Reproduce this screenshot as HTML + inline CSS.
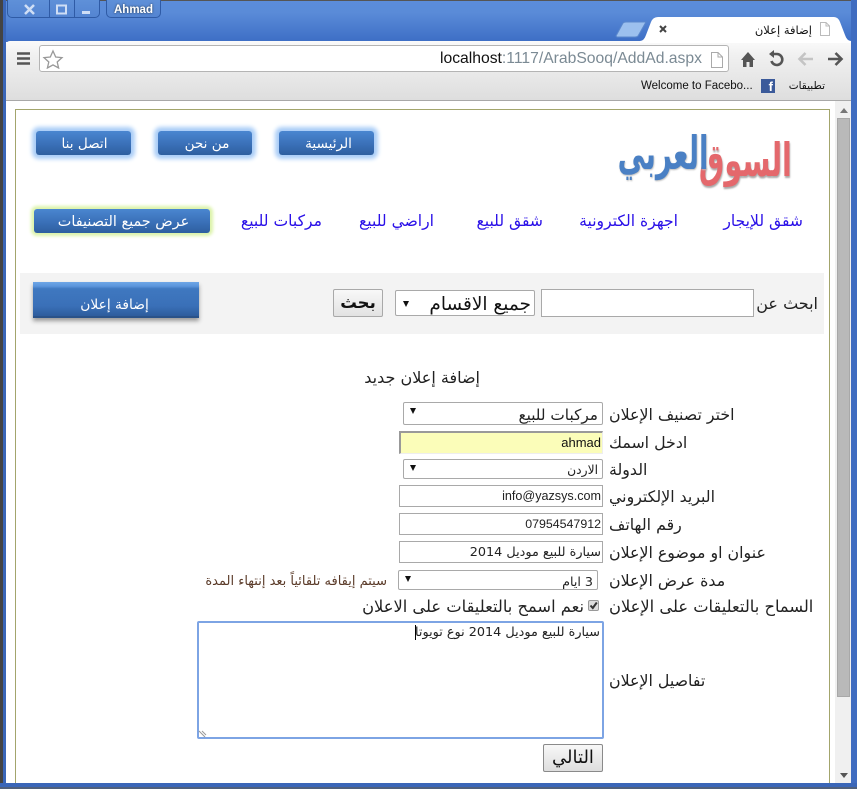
<!DOCTYPE html>
<html lang="ar"><head><meta charset="utf-8"><title>إضافة إعلان</title>
<style>
html,body{margin:0;padding:0;width:857px;height:789px;overflow:hidden;background:#fff}
body{position:relative;font-family:"DejaVu Sans","Liberation Sans",sans-serif;color:#222}
.a{position:absolute;box-sizing:border-box}
.t{position:absolute;white-space:nowrap;direction:rtl;text-align:right;line-height:18px}
.bl{color:#2a10e8;font-size:15.6px}
.btn{position:absolute;box-sizing:border-box;color:#fff;text-align:center;border-radius:3px;background:linear-gradient(#4a86d0,#3a70b8 55%,#2e5f9f);font-size:13.6px;line-height:26px;direction:rtl;white-space:nowrap;overflow:hidden}
.sel,.inp{position:absolute;box-sizing:border-box;background:#fff;border:1px solid #a9a9a9;direction:rtl;white-space:nowrap;color:#222;font-size:12px}
.sel{border-radius:2px}
.arr{position:absolute;left:6px;top:7px;width:0;height:0;border-left:3.5px solid transparent;border-right:3.5px solid transparent;border-top:6px solid #111}
.lb{position:absolute;left:609px;white-space:nowrap;direction:rtl;font-size:15.8px;line-height:18px;color:#222}
</style></head><body>
<!-- window chrome -->
<div class="a" style="left:0;top:0;width:857px;height:42px;background:linear-gradient(#5b8ddb,#5a8bd8 30%,#3d6ec5)"></div>
<div class="a" style="left:0;top:0;width:857px;height:1px;background:#555"></div>
<div class="a" style="left:0;top:0;width:3px;height:789px;background:#444"></div>
<div class="a" style="left:3px;top:0;width:3px;height:789px;background:#3a66b8"></div>
<div class="a" style="left:851px;top:0;width:6px;height:789px;background:#3f6cc0"></div>
<!-- caption buttons -->
<div class="a" style="left:7px;top:0;width:93px;height:18px;background:linear-gradient(#5f90d8,#5485d2);border:1px solid #2f5ba6;border-top:0;border-radius:0 0 5px 5px"></div>
<div class="a" style="left:49px;top:0;width:1px;height:17px;background:#2f5ba6"></div>
<div class="a" style="left:74px;top:0;width:1px;height:17px;background:#2f5ba6"></div>
<svg class="a" style="left:20px;top:3px" width="70" height="14"><path d="M5 2 14 11M14 2 5 11" stroke="#cfdef5" stroke-width="2.500"/><rect x="37" y="2.500" width="9" height="8" fill="none" stroke="#cfdef5" stroke-width="2"/><rect x="62" y="8" width="10" height="3" fill="#cfdef5"/></svg>
<div class="a" style="left:106px;top:0;width:55px;height:18px;background:linear-gradient(#5f90d8,#5485d2);border:1px solid #2f5ba6;border-top:0;border-radius:0 0 5px 5px;color:#fff;font:bold 11.5px/20px 'Liberation Sans',sans-serif;text-align:center;text-shadow:0 0 2px #234">Ahmad</div>
<!-- toolbar -->
<div class="a" style="left:6px;top:41px;width:845px;height:60px;background:linear-gradient(#fafafa,#f0f0f0 25%,#dedede);border-radius:4px 4px 0 0;border-bottom:1px solid #a8a8a8"></div>
<!-- tabs -->
<svg class="a" style="left:610px;top:15px" width="247" height="28"><path d="M6 21 13 8Q14 7 16 7H36L28 21Q27 22 25 22H7Z" fill="#9cc0ee" stroke="#5b88cc"/><path d="M30 26Q34 26 36 20L41 7Q43 2 48 2H224Q228 2 230 7L235 20Q237 26 241 26V28H30Z" fill="#fff"/></svg>
<svg class="a" style="left:656px;top:22px" width="14" height="14"><path d="M4 4 10 10M10 4 4 10" stroke="#444" stroke-width="2"/></svg>
<div class="t" style="right:45px;top:21px;font-size:11.500px;color:#111">إضافة إعلان</div>
<svg class="a" style="left:819px;top:21px" width="12" height="16"><path d="M1.5 1.5H7L10.5 5V14.5H1.5ZM7 1.5V5H10.5" fill="#fff" stroke="#bbb"/></svg>
<!-- address bar -->
<div class="a" style="left:39px;top:45px;width:690px;height:27px;background:#fff;border:1px solid #b4b4b4;border-radius:3px"></div>
<div class="a" style="left:440px;top:49px;white-space:nowrap;font:15.7px/20px 'Liberation Sans',sans-serif;color:#111">localhost<span style="color:#7b8a94">:1117/ArabSooq/AddAd.aspx</span></div>
<svg class="a" style="left:710px;top:51px" width="14" height="18"><path d="M1.5 1.5H8L12.5 6V16.5H1.5ZM8 1.5V6H12.5" fill="#fff" stroke="#aaa"/></svg>
<svg class="a" style="left:16px;top:51px" width="16" height="15"><path d="M1 2.5H14M1 7.5H14M1 12.5H14" stroke="#555" stroke-width="2.6"/></svg>
<svg class="a" style="left:42px;top:49px" width="22" height="20"><path d="M11 2 13.7 8 20 8.6 15.2 13 16.6 19 11 15.9 5.4 19 6.8 13 2 8.6 8.3 8Z" fill="#fff" stroke="#999" stroke-width="1.3"/></svg>
<svg class="a" style="left:738px;top:50px" width="20" height="18"><path d="M10 2 3 10H5V17H8.500V12H11.500V17H15V10H17Z" fill="#555"/></svg>
<svg class="a" style="left:767px;top:50px" width="18" height="18"><path d="M4 4H10A5.500 5.500 0 1 1 4.500 11" fill="none" stroke="#555" stroke-width="2.600"/><path d="M2 4 7 0V8Z" fill="#555"/></svg>
<svg class="a" style="left:797px;top:51px" width="18" height="16"><path d="M16 8H3M8.500 2 2.500 8 8.500 14" fill="none" stroke="#c4c4c4" stroke-width="2.600"/></svg>
<svg class="a" style="left:826px;top:51px" width="18" height="16"><path d="M2 8H15M9.500 2 15.500 8 9.500 14" fill="none" stroke="#555" stroke-width="2.600"/></svg>
<!-- bookmarks -->
<div class="a" style="left:641px;top:78px;white-space:nowrap;font:11.5px/16px 'Liberation Sans',sans-serif;color:#111">Welcome to Facebo...</div>
<div class="a" style="left:761px;top:79px;width:14px;height:14px;background:#3b5a9a;color:#fff;font:bold 13px/16px 'Liberation Sans',sans-serif;text-align:right;padding-right:2px">f</div>
<div class="t" style="right:32px;top:77px;font-size:10.500px;color:#111">تطبيقات</div>
<!-- page -->
<div class="a" style="left:15px;top:109px;width:815px;height:690px;border:1px solid #a3a56c"></div>
<div class="a" style="left:835px;top:101px;width:16px;height:682px;background:#f0f0f0"></div>
<div class="a" style="left:837px;top:118px;width:13px;height:579px;background:#b9b9b9;border:1px solid #a8a8a8"></div>
<div class="a" style="left:840px;top:108px;width:0;height:0;border-left:4px solid transparent;border-right:4px solid transparent;border-bottom:5px solid #777"></div>
<div class="a" style="left:840px;top:773px;width:0;height:0;border-left:4px solid transparent;border-right:4px solid transparent;border-top:5px solid #555"></div>
<!-- frame bottom, above page overflow -->
<div class="a" style="left:0;top:783px;width:857px;height:4px;background:#3a66b8"></div>
<div class="a" style="left:0;top:787px;width:857px;height:2px;background:#50607c"></div>
<!-- nav buttons -->
<div class="btn" style="left:36px;top:131px;width:95px;height:24px;box-shadow:0 0 4px 4px #a9cdf7;padding-left:2px">اتصل بنا</div>
<div class="btn" style="left:158px;top:131px;width:94px;height:24px;box-shadow:0 0 4px 4px #a9cdf7;padding-left:4px">من نحن</div>
<div class="btn" style="left:279px;top:131px;width:95px;height:24px;box-shadow:0 0 4px 4px #a9cdf7;padding-left:4px">الرئيسية</div>
<!-- logo -->
<div class="t" style="right:65px;top:137px;font-size:46px;line-height:46px;font-weight:bold;color:#e4686c;text-shadow:1px 2px 2px #aaa;transform:scaleX(.62);transform-origin:right top">السوق</div>
<div class="t" style="right:149px;top:130px;font-size:46px;line-height:46px;font-weight:bold;color:#4a80c4;text-shadow:1px 1px 2px #bbb;transform:scaleX(.6);transform-origin:right top">العربي</div>
<!-- categories -->
<div class="btn" style="left:34px;top:209px;width:176px;height:24px;box-shadow:0 0 3px 3px #dcf3aa;font-size:14.400px;line-height:27px;padding-left:3px">عرض جميع التصنيفات</div>
<div class="t bl" style="right:54px;top:212px">شقق للإيجار</div>
<div class="t bl" style="right:179px;top:212px">اجهزة الكترونية</div>
<div class="t bl" style="right:314px;top:212px">شقق للبيع</div>
<div class="t bl" style="right:423px;top:212px">اراضي للبيع</div>
<div class="t bl" style="right:535px;top:212px">مركبات للبيع</div>
<!-- search bar -->
<div class="a" style="left:20px;top:273px;width:804px;height:61px;background:#f3f3f3"></div>
<div class="btn" style="left:33px;top:282px;width:166px;height:36px;border-radius:0;font-size:13.800px;line-height:46px;background:linear-gradient(#6ea6e6 0,#5c96dc 12%,#3f78c0 20%,#3a70b8 70%,#2d5c9c);box-shadow:0 3px 4px #999;border-bottom:2px solid #2a5288;padding-right:3px">إضافة إعلان</div>
<div class="t" style="right:39px;top:295px;font-size:16px;color:#222">ابحث عن</div>
<div class="inp" style="left:541px;top:289px;width:213px;height:28px"></div>
<div class="sel" style="left:395px;top:290px;width:140px;height:26px;text-align:right;padding-right:3px;font-size:18.500px;line-height:27px;color:#111"><span class="arr" style="left:7px;top:10px"></span>جميع الاقسام</div>
<div class="a" style="left:333px;top:289px;width:50px;height:28px;border:1px solid #a9a9a9;border-radius:2px;background:linear-gradient(#f8f8f8,#e2e2e2);text-align:center;font-size:16.500px;line-height:26px;font-weight:bold;color:#111;direction:rtl">بحث</div>
<div class="t" style="right:377px;top:369px;font-size:16px;color:#222">إضافة إعلان جديد</div>
<!-- form -->
<div class="lb" style="top:406px">اختر تصنيف الإعلان</div>
<div class="sel" style="left:403px;top:402px;width:200px;height:23px;text-align:right;padding-right:4px;font-size:15.300px;line-height:24px"><span class="arr" style="top:5px"></span>مركبات للبيع</div>
<div class="lb" style="top:434px">ادخل اسمك</div>
<div class="inp" style="left:399px;top:431px;width:204px;height:23px;background:#fbfdb9;border:none;border-top:2px solid #999;border-left:2px solid #999;border-right:1px solid #eee;border-bottom:1px solid #eee;text-align:right;padding-right:1px;font:13px/19px 'Liberation Sans',sans-serif;color:#111">ahmad</div>
<div class="lb" style="top:461px">الدولة</div>
<div class="sel" style="left:403px;top:459px;width:200px;height:20px;text-align:right;padding-right:4px;font-size:12.300px;line-height:20px"><span class="arr" style="top:5px"></span>الاردن</div>
<div class="lb" style="top:488px">البريد الإلكتروني</div>
<div class="inp" style="left:399px;top:485px;width:204px;height:22px;text-align:right;padding-right:1px;font:12.600px/20px 'Liberation Sans',sans-serif">info@yazsys.com</div>
<div class="lb" style="top:516px">رقم الهاتف</div>
<div class="inp" style="left:399px;top:513px;width:204px;height:22px;text-align:right;padding-right:1px;font:12.400px/20px 'Liberation Sans',sans-serif">07954547912</div>
<div class="lb" style="top:544px">عنوان او موضوع الإعلان</div>
<div class="inp" style="left:399px;top:541px;width:204px;height:22px;text-align:right;padding-right:1px;font-size:12.800px;line-height:22px">سيارة للبيع موديل 2014</div>
<div class="lb" style="top:572px">مدة عرض الإعلان</div>
<div class="sel" style="left:398px;top:570px;width:200px;height:20px;text-align:right;padding-right:4px;font-size:12.700px;line-height:21px"><span class="arr" style="top:5px"></span>3 ايام</div>
<div class="t" style="right:470px;top:573px;font-size:13px;color:#5a3a28">سيتم إيقافه تلقائياً بعد إنتهاء المدة</div>
<div class="lb" style="top:598px;font-size:16.300px">السماح بالتعليقات على الإعلان</div>
<div class="a" style="left:588px;top:600px;width:11px;height:11px;background:#ddd;border:1px solid #999;border-radius:2px"></div>
<svg class="a" style="left:588px;top:600px" width="11" height="11"><path d="M2.500 5.500 4.800 8 8.800 2.500" fill="none" stroke="#333" stroke-width="2"/></svg>
<div class="t" style="right:273px;top:598px;font-size:16.300px;color:#222">نعم اسمح بالتعليقات على الاعلان</div>
<div class="a" style="left:197px;top:621px;width:407px;height:118px;border:2px solid #7da4e4;border-radius:2px;background:#fff"></div>
<div class="t" style="right:257px;top:624px;font-size:12.800px;color:#222">سيارة للبيع موديل 2014 نوع تويوتا</div>
<div class="a" style="left:415px;top:625px;width:1px;height:15px;background:#000"></div>
<svg class="a" style="left:198px;top:729px" width="9" height="9"><path d="M1 2 7 8M4 2 8 6" stroke="#999"/></svg>
<div class="lb" style="top:672px">تفاصيل الإعلان</div>
<div class="a" style="left:543px;top:744px;width:60px;height:28px;border:1px solid #8a8a8a;border-radius:2px;background:linear-gradient(#f8f8f8,#dedede);text-align:center;font-size:18px;line-height:26px;color:#111;direction:rtl">التالي</div>
</body></html>
